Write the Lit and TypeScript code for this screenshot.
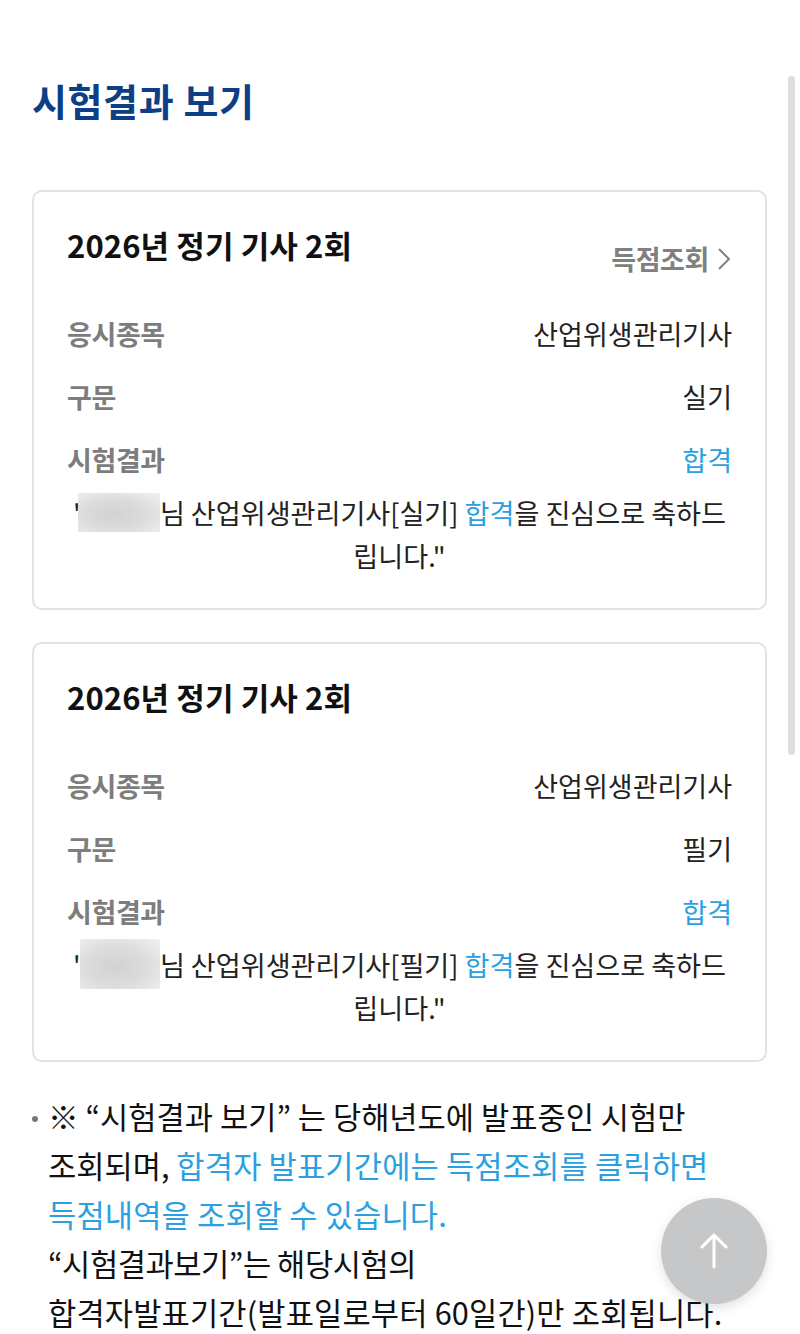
import { LitElement, html, css } from "lit";
import { customElement } from "lit/decorators.js";

@customElement("app-root")
export class AppRoot extends LitElement {
  static styles = css`
    :host { display: block; width: 800px; height: 1334px; overflow: hidden; position: relative; background: #fff; font-family: "Noto Sans CJK KR", "Noto Sans", sans-serif; color: #111; }
    .page { padding: 74px 33px 0 32px; display: flex; flex-direction: column; }
    h1 { margin: 0; font-size: 38px; line-height: 52px; font-weight: 700; color: #0c3f86; height: 116px; letter-spacing: 0.6px; }
    .card { border: 2px solid #e2e2e2; border-radius: 10px; height: 420px; box-sizing: border-box; padding: 31px 33px 0 33px; margin-bottom: 32px; display: flex; flex-direction: column; }
    .head { display: flex; justify-content: space-between; align-items: flex-start; height: 80px; }
    h2 { margin: 0; font-size: 31px; line-height: 44px; font-weight: 700; color: #111; letter-spacing: 0.1px; }
    .link { display: flex; align-items: center; gap: 8px; font-size: 27px; line-height: 40px; font-weight: 700; color: #808080; margin: 16px 1px 0 0; letter-spacing: -0.4px; }
    .row { display: flex; justify-content: space-between; height: 63px; align-items: flex-start; font-size: 27px; line-height: 62px; }
    .k { color: #7d7d7d; font-weight: 700; letter-spacing: -0.4px; }
    .v { color: #222; font-weight: 400; }
    .msg { text-align: center; font-size: 27.1px; line-height: 43px; color: #222; margin-top: -1px; }
    .blue { color: #2b9fe0; }
    .blur { display: inline-block; position: relative; width: 82px; height: 0; margin-left: -8px; }
    .blur::before { content: ""; position: absolute; left: 0; right: 0; top: -31px; height: 39px; background: radial-gradient(ellipse at 45% 55%, #d2d2d2 0%, #dcdcdc 50%, #f1f1f1 100%); }
    .blur.tall { width: 80px; margin-left: -6px; }
    .blur.tall::before { top: -37px; height: 50px; }
    .notes { margin: 0; padding: 0 0 0 16px; font-size: 30.7px; line-height: 49px; color: #111; position: relative; top: -3px; }
    .notes::before { content: ""; position: absolute; left: 0; top: 25px; width: 6px; height: 6px; border-radius: 50%; background: #777; }
    .wide { letter-spacing: 0.16px; }
    .tight { letter-spacing: -0.45px; }
    .scroll { position: absolute; left: 788px; top: 76px; width: 7px; height: 679px; background: #dedede; border-radius: 4px; }
    .top { position: absolute; left: 661px; top: 1198px; width: 106px; height: 106px; border-radius: 50%; background: #c6c7c9; box-shadow: 0 4px 12px rgba(0,0,0,.12); display: flex; align-items: center; justify-content: center; }
  `;

  card(kind: string, link: boolean) {
    const lead = `님 산업위생관리기사[${kind}] `;
    return html`<section class="card">
      <div class="head"><h2>2026년 정기 기사 2회</h2>
        ${link ? html`<div class="link">득점조회<svg width="14" height="24" viewBox="0 0 14 24" fill="none" stroke="#808080" stroke-width="2"><path d="M2 2l10 10L2 22"/></svg></div>` : ""}
      </div>
      <div class="row"><span class="k">응시종목</span><span class="v">산업위생관리기사</span></div>
      <div class="row"><span class="k">구문</span><span class="v">${kind}</span></div>
      <div class="row"><span class="k">시험결과</span><span class="v blue">합격</span></div>
      <div class="msg">"<span class="blur ${link ? "" : "tall"}"></span>${lead}<span class="blue">합격</span>을 진심으로 축하드립니다."</div>
    </section>`;
  }

  render() {
    return html`<div class="page">
        <h1>시험결과 보기</h1>
        ${this.card("실기", true)}
        ${this.card("필기", false)}
        <div class="notes">※ “시험결과 보기” 는 당해년도에 발표중인 시험만<br>조회되며, <span class="blue wide">합격자 발표기간에는 득점조회를 클릭하면<br>득점내역을 조회할 수 있습니다.</span><br><span class="tight">“시험결과보기”는 해당시험의</span><br><span class="wide">합격자발표기간(발표일로부터 60일간)만 조회됩니다.</span></div>
      </div>
      <div class="scroll"></div>
      <div class="top"><svg width="28" height="36" viewBox="0 0 28 36" fill="none" stroke="#fff" stroke-width="3" stroke-linecap="round"><path d="M14 2v32M2 14L14 2l12 12"/></svg></div>`;
  }
}
